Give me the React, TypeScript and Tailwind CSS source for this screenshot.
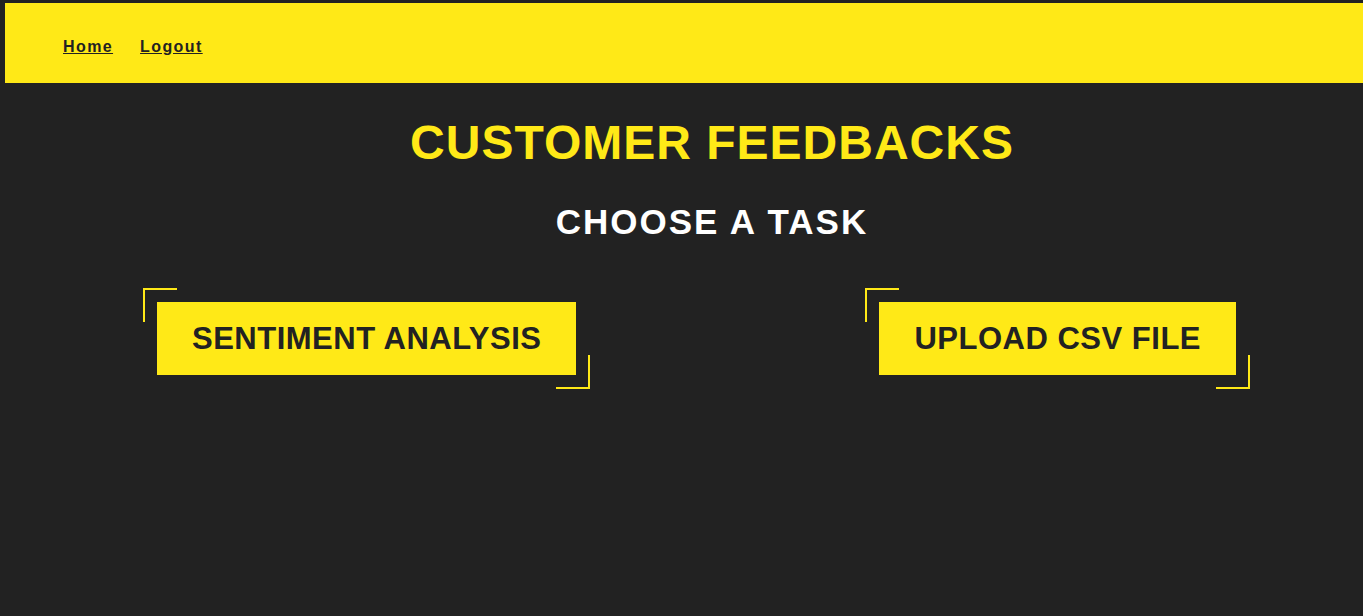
const LINKS = ["Home", "Logout"];

const TASKS = ["SENTIMENT ANALYSIS", "UPLOAD CSV FILE"];

function TaskButton({ label }: { label: string }) {
  return (
    <div className="relative p-[14px]">
      <span className="absolute top-0 left-0 w-[34px] h-[34px] border-t-2 border-l-2 border-[#ffe917]" />
      <span className="absolute bottom-0 right-0 w-[34px] h-[34px] border-b-2 border-r-2 border-[#ffe917]" />
      <button className="block bg-[#ffe917] text-[#222222] font-bold text-[31px] leading-[35px] tracking-[0.5px] px-[35px] py-[19px] whitespace-nowrap">
        {label}
      </button>
    </div>
  );
}

export default function App() {
  return (
    <div
      className="min-h-screen bg-[#222222] pt-[3px] overflow-hidden"
      style={{ fontFamily: '"Liberation Sans", Arial, sans-serif' }}
    >
      {/* Nav */}
      <nav className="ml-[5px] h-[80px] bg-[#ffe917] pl-[58px] pt-[35px]">
        <ul className="flex gap-[27px] leading-[18px]">
          {LINKS.map((l) => (
            <li key={l}>
              <a
                href="#"
                className="text-[16px] leading-[18px] font-bold tracking-[1.4px] text-[#222222] underline"
              >
                {l}
              </a>
            </li>
          ))}
        </ul>
      </nav>

      {/* Heading */}
      <div className="pl-[61px] text-center">
        <h1 className="mt-[32px] text-[48px] leading-[55px] font-bold tracking-[1px] text-[#ffe917]">
          CUSTOMER FEEDBACKS
        </h1>
        <h2 className="mt-[32px] text-[35px] leading-[40px] font-bold tracking-[2px] text-white">
          CHOOSE A TASK
        </h2>
      </div>

      {/* Tasks */}
      <div className="flex pl-[143px] gap-[275px] mt-[46px]">
        {TASKS.map((t) => (
          <TaskButton key={t} label={t} />
        ))}
      </div>
    </div>
  );
}
